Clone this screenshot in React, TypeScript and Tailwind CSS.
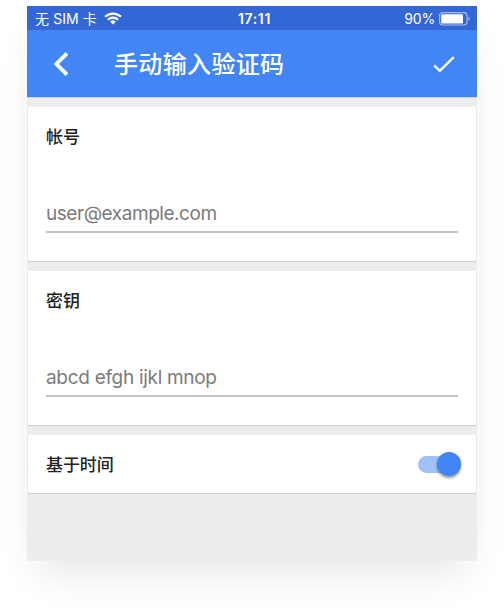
import React from "react";

function StatusBar() {
  return (
    <div className="grid h-6 grid-cols-3 items-center bg-[#3367d6] pr-[6px] pl-2 text-sm leading-6 text-white">
      <div className="flex items-center gap-2">
        <span className="pt-px whitespace-pre tracking-[0.1px]">无 SIM 卡</span>
        <svg className="-ml-px" width="18" height="13" viewBox="0 0 18 13" fill="none" stroke="white" strokeWidth="2.3">
          <path d="M1.1 4.8a11.2 11.2 0 0 1 15.8 0M4 7.7a7.1 7.1 0 0 1 10 0" />
          <path d="M9 12.5 6.2 9.7a4 4 0 0 1 5.6 0Z" fill="white" stroke="none" />
        </svg>
      </div>
      <span className="pt-px pl-[3px] text-center font-semibold tracking-[0.6px]">17:11</span>
      <div className="flex items-center justify-end gap-1">
        <span className="pt-px tracking-[-0.2px]">90%</span>
        <svg width="32" height="14" viewBox="0 0 32 14">
          <rect x="0.6" y="0.6" width="27.4" height="12.4" rx="3" fill="none" stroke="#a7bdec" strokeWidth="1.1" />
          <rect x="2.2" y="2.2" width="21.8" height="9.2" rx="1" fill="white" />
          <path d="M29.3 4.6c1.8.8 1.8 3.8 0 4.6Z" fill="#a7bdec" />
        </svg>
      </div>
    </div>
  );
}

function Header() {
  return (
    <header className="flex h-[68px] items-center border-b border-[#c5d8f8] bg-[#4285f4] pr-[22px] pl-[26px] text-white">
      <svg width="16" height="24" viewBox="0 0 16 24" fill="none" stroke="white" strokeWidth="3.8">
        <path d="M14 1.4 3.4 12 14 22.6" />
      </svg>
      <h1 className="ml-[45px] flex-1 pt-0.5 text-2xl font-medium tracking-[0.35px]">手动输入验证码</h1>
      <svg width="22" height="18" viewBox="0 0 22 18" fill="none" stroke="white" strokeWidth="2.4">
        <path d="m1.2 10.3 5.6 5.6L20.8 2.1" />
      </svg>
    </header>
  );
}

const card = "mx-px bg-white shadow-[0_1px_1px_#cfcfcf]";

function Field({ label, placeholder, spacing }: { label: string; placeholder: string; spacing: string }) {
  return (
    <section className={`${card} h-[154px] px-[18px] pt-[18px]`}>
      <label className="block text-[17px] leading-6 font-medium tracking-[-0.1px]">{label}</label>
      <div className={`mt-[47px] h-[37px] border-b-2 border-[#c4c4c4] text-[19px] leading-[35px] text-[#7b7b7b] ${spacing}`}>
        {placeholder}
      </div>
    </section>
  );
}

export default function App() {
  return (
    <div className="h-[609px] w-[504px] overflow-hidden bg-white pt-1.5 pl-[27px] font-['Inter','Noto_Sans_CJK_SC',sans-serif] text-[#212121]">
      <main className="h-[555px] w-[450px] bg-[#ededed] shadow-[0_22px_40px_-12px_rgba(0,0,0,0.11)]">
        <StatusBar />
        <Header />
        <div className="flex flex-col gap-2.5 pt-[9px]">
          <Field label="帐号" placeholder="user@example.com" spacing="tracking-[-0.45px]" />
          <Field label="密钥" placeholder="abcd efgh ijkl mnop" spacing="tracking-[-0.3px]" />
          <section className={`${card} flex h-[58px] items-center justify-between pr-[15px] pl-[18px]`}>
            <span className="pt-[3px] text-[17px] font-medium tracking-[-0.1px]">基于时间</span>
            <span className="flex h-[17px] w-[43px] items-center justify-end rounded-full bg-[#a0c2f9]">
              <span className="size-6 shrink-0 rounded-full bg-[#4285f4] shadow-[0_2px_3px_rgba(0,0,0,0.4)]" />
            </span>
          </section>
        </div>
      </main>
    </div>
  );
}
